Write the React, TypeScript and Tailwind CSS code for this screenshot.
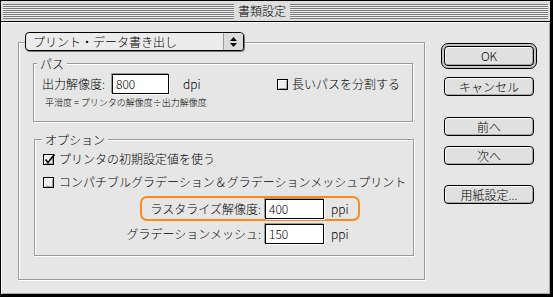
import React from 'react';

// classic Mac OS dialog: 書類設定 (document settings)

const Stripes = ({ className }: { className: string }) => (
  <div
    className={`h-[15px] bg-[repeating-linear-gradient(to_bottom,#7a7a7a_0px,#7a7a7a_1px,#f0f0f0_1px,#f0f0f0_2px)] ${className}`}
  />
);

const MacButton = ({ label, isDefault }: { label: string; isDefault?: boolean }) => (
  <div
    className={`flex w-[90px] items-center justify-center rounded-[4px] border border-black bg-[#e0e0e0] text-[12px] leading-none text-black shadow-[inset_1px_1px_0_#fff,inset_-1px_-1px_0_#a8a8a8] ${
      isDefault ? 'h-[20px]' : 'mx-[3px] h-[19px] shadow-[inset_1px_1px_0_#fff,inset_-1px_-1px_0_#a8a8a8,1px_1px_0_#8a8a8a]'
    }`}
  >
    {label}
  </div>
);

const Checkbox = ({ checked }: { checked?: boolean }) => (
  <div className="relative h-[11px] w-[11px] shrink-0 border border-black bg-[#eeeeee] shadow-[inset_1px_1px_0_#fff,inset_-1px_-1px_0_#a0a0a0]">
    {checked && (
      <svg className="absolute -left-[1px] -top-[2px] overflow-visible" width="13" height="13" viewBox="0 0 13 13">
        <path d="M2.5 6.5 L5 9.5 L11.5 1.5" fill="none" stroke="#000" strokeWidth="1.6" />
      </svg>
    )}
  </div>
);

const TextField = ({ value, width }: { value: string; width: string }) => (
  <div
    className={`flex h-[20px] ${width} shrink-0 items-center border border-black bg-white pl-[3px] text-[12px] leading-none shadow-[-1px_-1px_0_#9a9a9a,1px_1px_0_#fff]`}
  >
    {value}
  </div>
);

const GroupLabel = ({ text, className }: { text: string; className: string }) => (
  <div className={`-mt-[8px] h-[16px] w-fit bg-[#e6e6e6] px-[3px] text-[12px] leading-[16px] ${className}`}>
    {text}
  </div>
);

const ResRow = ({ label, value, highlight }: { label: string; value: string; highlight?: boolean }) => (
  <div
    className={`ml-[105px] flex h-[25px] w-[220px] items-center rounded-[7px] border-2 text-[12px] leading-none ${
      highlight ? 'border-[#ff8a1a]' : 'border-transparent'
    }`}
  >
    <div className="flex w-[119px] shrink-0 justify-end">
      <div className="shrink-0 whitespace-nowrap">{label}</div>
    </div>
    <div className="ml-[4px]">
      <TextField value={value} width="w-[59px]" />
    </div>
    <div className="ml-[7px]">ppi</div>
  </div>
);

export default function App() {
  return (
    <div className="flex h-[297px] w-[553px] flex-col border-t border-r-[3px] border-b-[3px] border-l border-black bg-[#e6e6e6] font-['Noto_Sans_CJK_JP','Noto_Sans',sans-serif] font-light text-black">
      {/* title bar */}
      <div className="flex h-[21px] shrink-0 items-center border-b border-black bg-[#dedede] px-[2px]">
        <Stripes className="w-[231px]" />
        <div className="px-[4px] text-[12px] leading-none">書類設定</div>
        <Stripes className="flex-1" />
      </div>

      <div className="flex flex-1 shadow-[inset_1px_1px_0_#fff,inset_-1px_-1px_0_#a8a8a8]">
        {/* main group */}
        <div className="mt-[20px] ml-[17px] h-[238px] w-[407px] shrink-0 border border-[#9a9a9a] shadow-[inset_1px_1px_0_#fff,1px_1px_0_#fff]">
          <div className="-mt-[11px] ml-[6px] flex h-[19px] w-[219px] overflow-hidden rounded-[4px] border border-black bg-[#ececec] shadow-[1px_1px_0_#777]">
            <div className="flex flex-1 items-center pl-[7px] text-[12px] leading-none">プリント・データ書き出し</div>
            <div className="flex w-[20px] flex-col items-center justify-center gap-[2px] border-l border-[#9a9a9a] bg-[#dcdcdc]">
              <svg width="7" height="4" viewBox="0 0 7 4">
                <path d="M0 4 L3.5 0 L7 4 Z" fill="#000" />
              </svg>
              <svg width="7" height="4" viewBox="0 0 7 4">
                <path d="M0 0 L7 0 L3.5 4 Z" fill="#000" />
              </svg>
            </div>
          </div>

          {/* パス */}
          <div className="mt-[12px] ml-[14px] h-[59px] w-[380px] border border-[#9a9a9a] shadow-[inset_1px_1px_0_#fff,1px_1px_0_#fff]">
            <GroupLabel text="パス" className="ml-[3px]" />
            <div className="flex h-[24px] items-center text-[12px] leading-none">
              <div className="w-[78px] shrink-0 pl-[8px]">出力解像度:</div>
              <TextField value="800" width="w-[57px]" />
              <div className="w-[108px] shrink-0 pl-[14px]">dpi</div>
              <Checkbox />
              <div className="ml-[4px]">長いパスを分割する</div>
            </div>
            <div className="mt-[1px] pl-[11px] text-[9px] leading-[12px]">平滑度 = プリンタの解像度÷出力解像度</div>
          </div>

          {/* オプション */}
          <div className="mt-[17px] ml-[15px] h-[117px] w-[380px] border border-[#9a9a9a] shadow-[inset_1px_1px_0_#fff,1px_1px_0_#fff]">
            <GroupLabel text="オプション" className="ml-[7px]" />
            <div className="flex h-[22px] items-center gap-[5px] pl-[8px] text-[12px] leading-none">
              <Checkbox checked />
              <div>プリンタの初期設定値を使う</div>
            </div>
            <div className="flex h-[24px] items-center gap-[5px] pl-[8px] text-[12px] leading-none">
              <Checkbox />
              <div className="whitespace-nowrap">コンパチブルグラデーション＆グラデーションメッシュプリント</div>
            </div>
            <div className="mt-[2px]">
              <ResRow label="ラスタライズ解像度:" value="400" highlight />
            </div>
            <ResRow label="グラデーションメッシュ:" value="150" />
          </div>
        </div>

        {/* buttons */}
        <div className="ml-[16px] flex w-[96px] flex-col">
          <div className="mt-[21px] w-[96px] rounded-[7px] border border-black bg-[#c4c4c4] p-[2px]">
            <MacButton label="OK" isDefault />
          </div>
          <div className="mt-[8px]">
            <MacButton label="キャンセル" />
          </div>
          <div className="mt-[21px]">
            <MacButton label="前へ" />
          </div>
          <div className="mt-[10px]">
            <MacButton label="次へ" />
          </div>
          <div className="mt-[20px]">
            <MacButton label="用紙設定..." />
          </div>
        </div>
      </div>
    </div>
  );
}
